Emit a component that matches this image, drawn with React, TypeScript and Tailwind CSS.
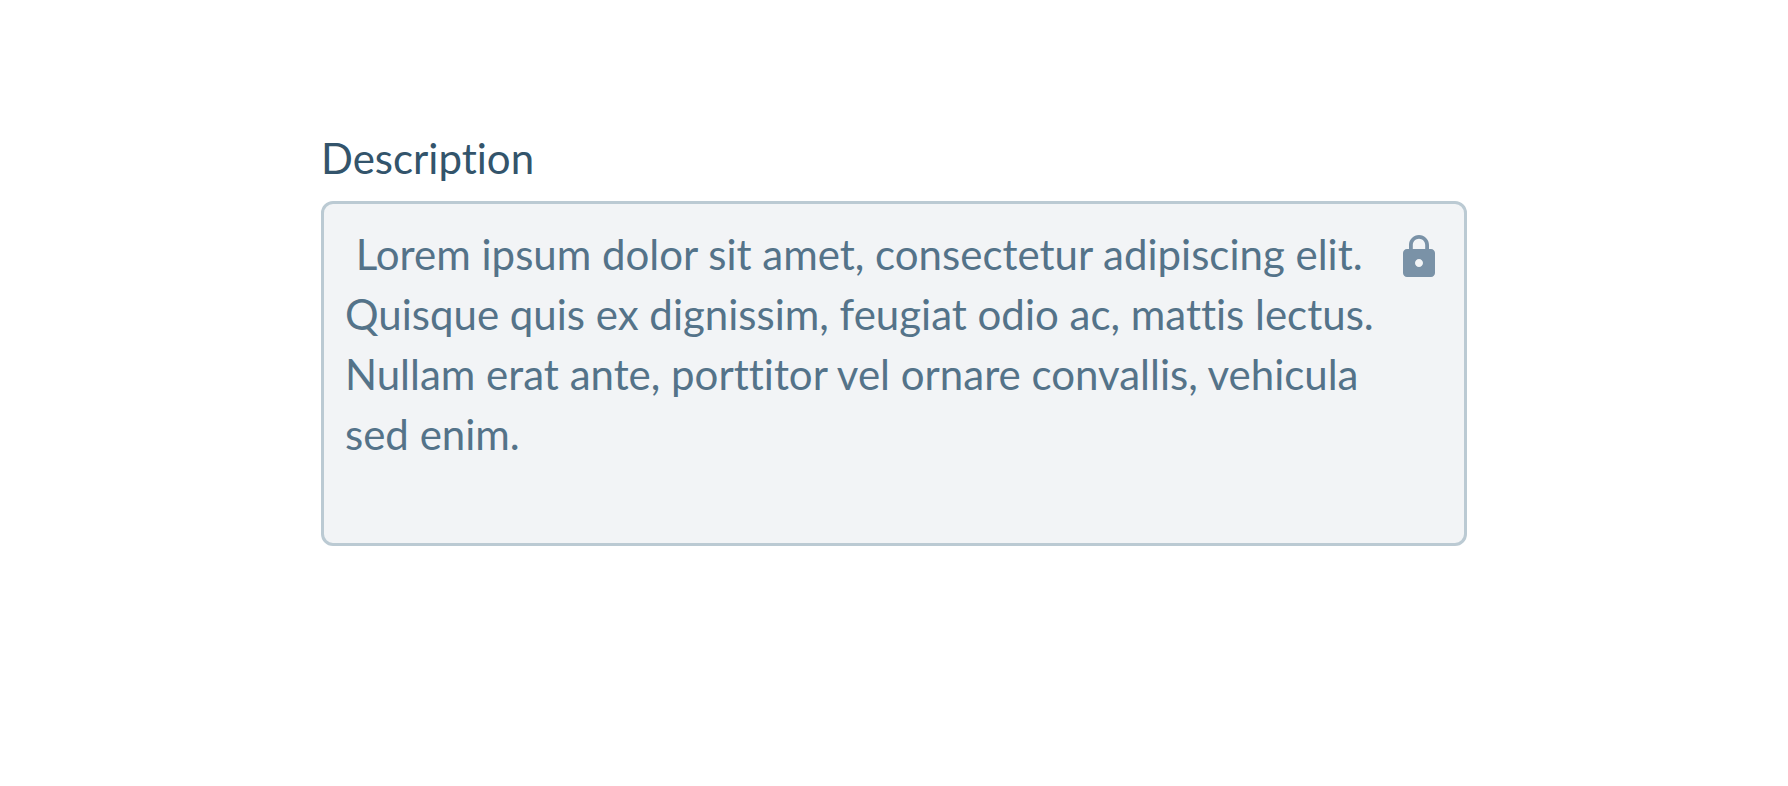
export default function App() {
  return (
    <main className="min-h-screen bg-white px-6 pt-[133px] font-['Lato',sans-serif] [font-variant-ligatures:none]">
      <div className="mx-auto max-w-[1146px]">
        <label htmlFor="description" className="block text-[42px] leading-[50px] text-[#33546b]">
          Description
        </label>
        <div className="mt-[18px] flex items-start rounded-xl border-3 border-[#bbcad3] bg-[#f2f4f6] pr-[29px]">
          <textarea
            id="description"
            readOnly
            rows={5}
            defaultValue={" Lorem ipsum dolor sit amet, consectetur adipiscing elit. Quisque quis ex dignissim, feugiat odio ac, mattis lectus. Nullam erat ante, porttitor vel ornare convallis, vehicula sed enim."}
            className="block min-w-0 flex-1 resize-none overflow-hidden bg-transparent pt-5 pr-4 pb-[19px] pl-[21px] text-[42px] leading-[60px] text-[#547389] outline-none"
          />
          <svg viewBox="4 1 16 21" className="mt-[31px] h-[42px] w-8 shrink-0 fill-[#7a92a7]" aria-hidden="true">
            <path d="M18 8h-1V6c0-2.760-2.240-5-5-5S7 3.240 7 6v2H6c-1.100 0-2 .9-2 2v10c0 1.100.9 2 2 2h12c1.100 0 2-.9 2-2V10c0-1.100-.9-2-2-2zm-6 9c-1.100 0-2-.9-2-2s.9-2 2-2 2 .9 2 2-.9 2-2 2zm3.100-9H8.900V6c0-1.710 1.390-3.100 3.100-3.100s3.100 1.390 3.100 3.100v2z" />
          </svg>
        </div>
      </div>
    </main>
  );
}
